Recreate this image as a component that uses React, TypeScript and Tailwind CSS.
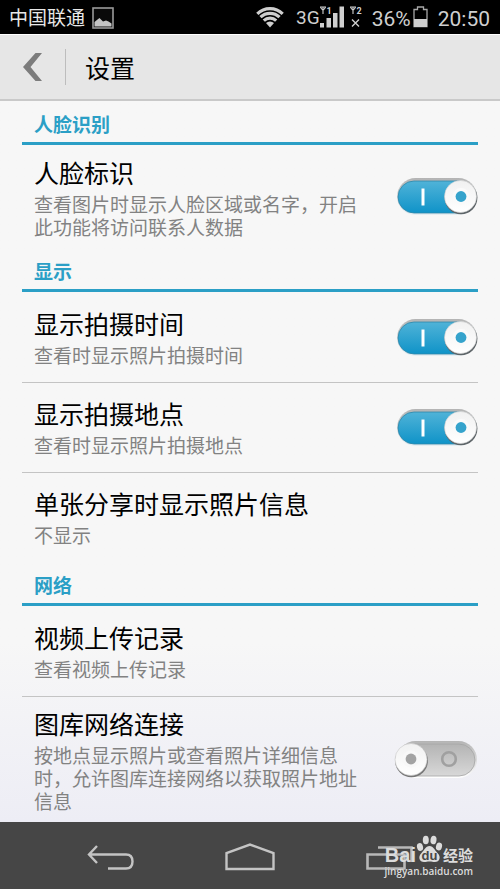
import { useState } from "react";
import type { ReactNode } from "react";

function StatusBar() {
  return (
    <div className="flex h-[34px] items-center bg-black pl-[9px] pr-2.5 text-[#cfcfcf]">
      <span className="text-[19px] leading-6 text-[#e8e8e8]">中国联通</span>
      <svg className="ml-[7px] mt-0.5 h-[22px] w-[22px]" viewBox="0 0 22 22" aria-hidden="true">
        <rect x="1" y="1" width="20" height="20" fill="#0a0a0a" stroke="#9a9a9a" strokeWidth="1.6" />
        <path d="M2.500 19.500V15l3-2.500 2-1.500 3.500 3.500 3-1 2.500 1 3 2v3z" fill="#c4c4c4" />
      </svg>
      <div className="ml-auto flex h-full items-center">
        <svg className="mr-3 h-[22px] w-[28px]" viewBox="0 0 28 22" aria-hidden="true">
          <g fill="none" stroke="#cfcfcf" strokeWidth="3.200">
            <path d="M1.300 7.800A18.300 18.300 0 0 1 26.700 7.800" />
            <path d="M4.500 11.200A13.600 13.600 0 0 1 23.500 11.200" />
            <path d="M7.800 14.600A8.900 8.900 0 0 1 20.200 14.600" />
          </g>
          <path d="M10 17A5.800 5.800 0 0 1 18 17L14 21.500z" fill="#cfcfcf" />
        </svg>
        <span className="mt-px font-['Roboto',sans-serif] text-[19px] leading-6">3G</span>
        <svg className="h-[22px] w-[25px]" viewBox="0 0 25 22" aria-hidden="true">
          <path d="M0 1h6M3 1v7M.5 1.500L3 4.500 5.500 1.500" fill="none" stroke="#cfcfcf" strokeWidth="1.100" />
          <text x="6.500" y="8" fontSize="9" fontWeight="700" fontFamily="Roboto, sans-serif" fill="#cfcfcf">1</text>
          <path d="M0 17h4v4.500H0zM6.500 12h4.500v9.500H6.500zM13 7h4.500v14.500H13zM19.500 .500H24v21h-4.500z" fill="#cfcfcf" />
        </svg>
        <svg className="ml-[5px] h-[22px] w-[12px]" viewBox="0 0 12 22" aria-hidden="true">
          <path d="M0 1h6M3 1v7M.5 1.500L3 4.500 5.500 1.500" fill="none" stroke="#cfcfcf" strokeWidth="1.100" />
          <text x="6.500" y="8" fontSize="9" fontWeight="700" fontFamily="Roboto, sans-serif" fill="#cfcfcf">2</text>
          <path d="M2 13.500l7 7M9 13.500l-7 7" stroke="#cfcfcf" strokeWidth="1.400" />
        </svg>
        <span className="ml-2.5 mt-1 font-['Roboto',sans-serif] text-[21px] leading-6">36%</span>
        <svg className="ml-0.5 h-[22px] w-[15px]" viewBox="0 0 15 22" aria-hidden="true">
          <path d="M1 3.500h3.500V1h6v2.500H14V20.500H1z" fill="none" stroke="#a8a8a8" strokeWidth="1.300" />
          <path d="M1 13h13v8H1z" fill="#cfcfcf" />
        </svg>
        <span className="ml-2.5 mt-1 font-['Roboto',sans-serif] text-[21px] leading-6">20:50</span>
      </div>
    </div>
  );
}

function TitleBar() {
  return (
    <header className="flex h-[67px] items-center border-b-2 border-t border-b-[#c9c9c9] border-t-white bg-[#e6e6e6] pl-[22px]">
      <button type="button" aria-label="返回" className="h-[30px] w-[22px]">
        <svg className="h-[30px] w-[22px]" viewBox="0 0 22 30" aria-hidden="true">
          <path d="M13.500 1H20L8.500 15 20 29H13.500L1 15z" fill="#7c7c7c" />
        </svg>
      </button>
      <div className="ml-[21px] h-9 w-px bg-[#bdbdbd]" />
      <h1 className="ml-[19px] text-[25px] leading-8 text-black">设置</h1>
    </header>
  );
}

function Toggle({ id, initial }: { id: string; initial: boolean }) {
  const [on, setOn] = useState(initial);
  return (
    <span className="relative block h-[40px] w-[84px] shrink-0">
      <svg className="block h-[40px] w-[84px]" viewBox="0 0 84 40" aria-hidden="true">
        <defs>
          <linearGradient id={id + "-track"} x1="0" y1="0" x2="0" y2="1">
            <stop offset="0" stopColor={on ? "#50b3d8" : "#b4b4b4"} />
            <stop offset="1" stopColor={on ? "#0f93c8" : "#d8d8d8"} />
          </linearGradient>
          <linearGradient id={id + "-rim"} x1="0" y1="0" x2="0" y2="1">
            <stop offset="0" stopColor="#b4b4b4" />
            <stop offset="1" stopColor={on ? "#e6eef2" : "#ffffff"} />
          </linearGradient>
          <linearGradient id={id + "-knob"} x1="0" y1="0" x2="0" y2="1">
            <stop offset="0" stopColor="#f1f1f1" />
            <stop offset="1" stopColor="#ffffff" />
          </linearGradient>
        </defs>
        <rect x="3" y="1" width="80" height="37" rx="18.500" fill={"url(#" + id + "-rim)"} />
        <rect x="4" y="4" width="77" height="32" rx="16" fill={"url(#" + id + "-track)"} stroke={on ? "#2d86a8" : "#a4a4a4"} strokeWidth="0.800" />
        {on ? (
          <>
            <path d="M29 11.500v17" stroke="#ffffff" strokeWidth="3" />
            <circle cx="67" cy="20.800" r="16.400" fill="#5d6468" />
            <circle cx="66.500" cy="19.500" r="16" fill={"url(#" + id + "-knob)"} stroke="#d5d5d5" strokeWidth="0.600" />
            <circle cx="67" cy="19.500" r="8.500" fill="#fafafa" />
            <circle cx="67" cy="19.500" r="5.400" fill="#35a3cc" />
          </>
        ) : (
          <>
            <circle cx="55" cy="19" r="6.800" fill="none" stroke="#a0a0a0" strokeWidth="2.600" />
            <circle cx="17.500" cy="20.800" r="16.400" fill="#777777" />
            <circle cx="17" cy="19.500" r="16" fill={"url(#" + id + "-knob)"} stroke="#c9c9c9" strokeWidth="0.600" />
            <circle cx="17" cy="19" r="8.500" fill="#f8f8f8" />
            <circle cx="17" cy="19" r="5.400" fill="#a3a3a3" />
          </>
        )}
      </svg>
      <input
        id={id}
        type="checkbox"
        checked={on}
        onChange={(e) => setOn(e.target.checked)}
        className="absolute inset-0 h-full w-full cursor-pointer opacity-0"
      />
    </span>
  );
}

function Section({ title, children }: { title: string; children: ReactNode }) {
  return (
    <section>
      <h2 className="border-b-[3px] border-[#2b9fc6] pb-1.5 pl-3 pt-[11px] text-[19px] font-bold leading-6 text-[#2b9fc6]">
        {title}
      </h2>
      <div className="divide-y divide-[#c4c4c4] pt-px">{children}</div>
    </section>
  );
}

type RowProps = { title: string; summary: string; id?: string; on?: boolean; tall?: boolean };

function Row({ title, summary, id, on = false, tall = false }: RowProps) {
  const text = (
    <>
      <span className="block text-[25px] leading-[39px] text-black">{title}</span>
      <span className="block text-[19px] leading-[23px] text-[#828282]">{summary}</span>
    </>
  );
  const pad = tall ? "pt-[7px] pb-2.5" : "pt-[11px] pb-4";
  if (!id) {
    return (
      <button type="button" className={"block w-full pl-3 text-left " + pad}>
        {text}
      </button>
    );
  }
  return (
    <div className="flex items-center pl-3">
      <label htmlFor={id} className={"min-w-0 flex-1 pr-[26px] " + pad}>
        {text}
      </label>
      <Toggle id={id} initial={on} />
    </div>
  );
}

function Watermark() {
  return (
    <div className="absolute bottom-3 right-[27px] flex flex-col items-end text-[#dcdcdc]">
      <div className="flex items-end">
        <span className="font-['Liberation_Sans',sans-serif] text-[20px] font-bold leading-5">Bai</span>
        <svg className="mb-0.5 h-[28px] w-[27px]" viewBox="0 0 27 28" aria-hidden="true">
          <g fill="#dcdcdc">
            <ellipse cx="4" cy="12" rx="3" ry="4" transform="rotate(-15 4 12)" />
            <ellipse cx="9.800" cy="5" rx="3" ry="4.300" />
            <ellipse cx="17.500" cy="5" rx="3" ry="4.300" transform="rotate(8 17.500 5)" />
            <ellipse cx="23" cy="11.500" rx="3" ry="4" transform="rotate(15 23 11.500)" />
            <path d="M13.500 11c4 0 5 4 8 7 4 4 2 9-2.500 9-2.500 0-3-.6-5.500-.6s-3 .6-5.500.6C3.500 27 1.500 22 5.500 18c3-3 4-7 8-7z" />
          </g>
          <text x="13.500" y="25" textAnchor="middle" fontSize="13" fontWeight="700" fontFamily="Liberation Sans, sans-serif" fill="#464646">du</text>
        </svg>
        <span className="text-[15px] font-bold leading-5">经验</span>
      </div>
      <span className="font-['Open_Sans',sans-serif] text-[10px] font-semibold leading-3">jingyan.baidu.com</span>
    </div>
  );
}

function NavBar() {
  return (
    <nav className="relative flex h-[67px] items-center justify-center gap-[87px] bg-[#464646]">
      <button type="button" aria-label="返回">
        <svg className="block h-[30px] w-[52px]" viewBox="0 0 52 30" fill="none" stroke="#c4c4c4" strokeWidth="2.400" aria-hidden="true">
          <path d="M12 5L4 13.500 12 22M4.500 13.500H41Q47.500 13.500 47.500 20.500T41 27.500H23" />
        </svg>
      </button>
      <button type="button" aria-label="主屏幕">
        <svg className="block h-[30px] w-[52px]" viewBox="0 0 52 30" fill="none" stroke="#c4c4c4" strokeWidth="2.400" aria-hidden="true">
          <path d="M2.500 28V12L26 3.500 49.500 12V28z" />
        </svg>
      </button>
      <button type="button" aria-label="最近任务">
        <svg className="block h-[30px] w-[52px]" viewBox="0 0 52 30" fill="none" stroke="#b8b8b8" strokeWidth="2.600" aria-hidden="true">
          <path d="M4.500 13.500H41.500V27.500H4.500zM15 6.500H48.500V21" />
        </svg>
      </button>
      <Watermark />
    </nav>
  );
}

export default function App() {
  return (
    <div className="flex min-h-screen w-full flex-col bg-[#f7f7f7] font-['Noto_Sans_CJK_SC',sans-serif]" lang="zh-CN">
      <StatusBar />
      <TitleBar />
      <main className="flex-1 bg-linear-to-b from-[#f7f7f7] from-75% to-[#ededf5] px-[22px]">
        <Section title="人脸识别">
          <Row id="face" on tall title="人脸标识" summary="查看图片时显示人脸区域或名字，开启此功能将访问联系人数据" />
        </Section>
        <Section title="显示">
          <Row id="time" on title="显示拍摄时间" summary="查看时显示照片拍摄时间" />
          <Row id="place" on title="显示拍摄地点" summary="查看时显示照片拍摄地点" />
          <Row title="单张分享时显示照片信息" summary="不显示" />
        </Section>
        <Section title="网络">
          <Row title="视频上传记录" summary="查看视频上传记录" />
          <Row id="network" tall title="图库网络连接" summary="按地点显示照片或查看照片详细信息时，允许图库连接网络以获取照片地址信息" />
        </Section>
      </main>
      <NavBar />
    </div>
  );
}
